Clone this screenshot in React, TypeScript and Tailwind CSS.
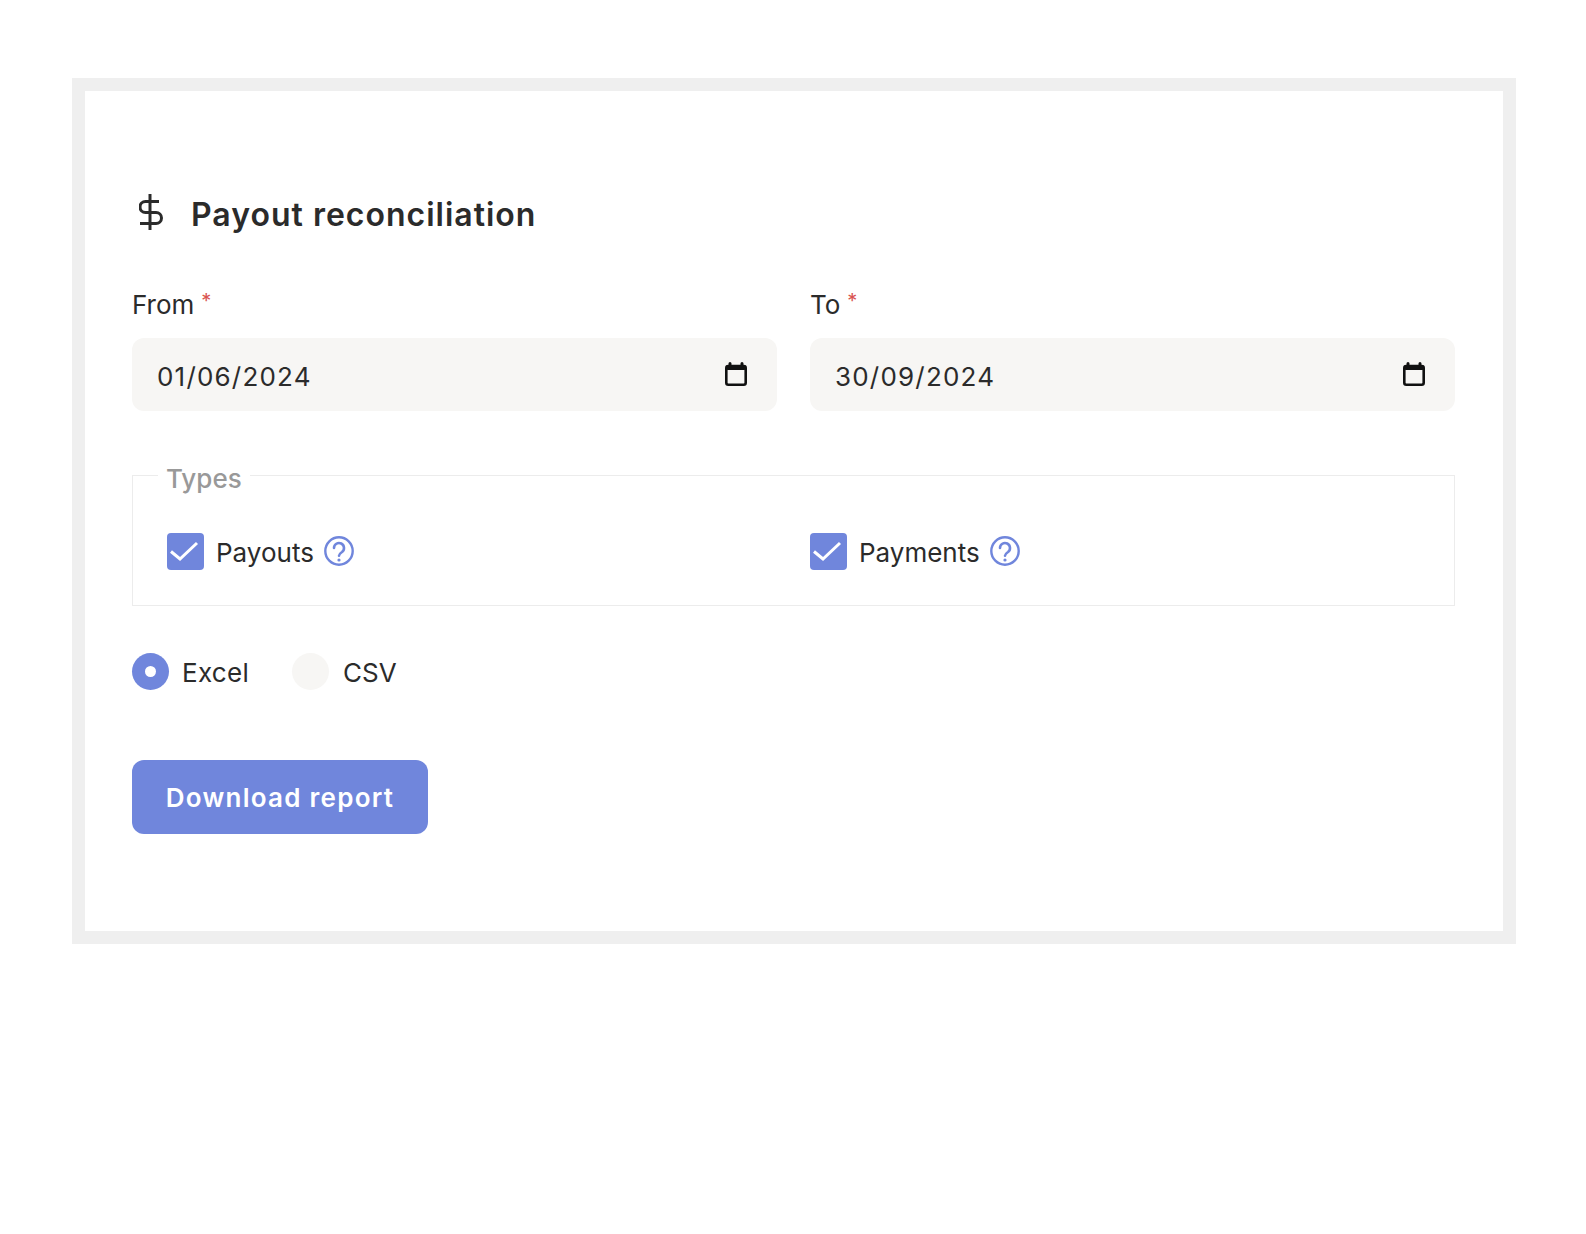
import React from "react";

const font = { fontFamily: '"Inter", "Liberation Sans", sans-serif' };

function Calendar() {
  return (
    <svg width="22" height="24" viewBox="0 0 22 24" className="mb-[2px] shrink-0">
      <path d="M5 1.5v3M17 1.5v3" stroke="#111" strokeWidth="3" strokeLinecap="round" />
      <rect x="1.3" y="4" width="19.4" height="18.7" rx="2" fill="none" stroke="#111" strokeWidth="2.6" />
      <rect x="1.3" y="3" width="19.4" height="5" rx="1.5" fill="#111" />
    </svg>
  );
}

function Help() {
  return (
    <svg width="30" height="30" viewBox="0 0 30 30" className="mb-[2px] shrink-0">
      <circle cx="15" cy="15" r="13.7" fill="none" stroke="#7086dc" strokeWidth="2.4" />
      <path d="M10 12a5 5 0 1 1 8 4c-1.8 1.2-3 2-3 3.8" fill="none" stroke="#7086dc" strokeWidth="2.6" strokeLinecap="round" />
      <circle cx="15" cy="24" r="1.6" fill="#7086dc" />
    </svg>
  );
}

function Check() {
  return (
    <div className="h-[37px] w-[37px] shrink-0 rounded-[4px] bg-[#7086dc]">
      <svg width="37" height="37" viewBox="0 0 37 37">
        <path d="M4 18.5L13 26L30 10" fill="none" stroke="#fff" strokeWidth="3" />
      </svg>
    </div>
  );
}

function DateField({ label, value }: { label: string; value: string }) {
  return (
    <div className="flex flex-col">
      <div className="flex h-[32px] items-center pb-[2px] text-[26px] text-[#2b2b2b]">
        <span>{label}</span>
        <span className="ml-[7px] mb-[6px] text-[20px] text-[#d9534f]">*</span>
      </div>
      <div className="mt-[17px] flex h-[73px] items-center justify-between rounded-[12px] bg-[#f7f6f4] pl-[25px] pr-[30px]">
        <span className="pt-[4px] text-[26px] tracking-[1.2px] text-[#2b2b2b]">{value}</span>
        <Calendar />
      </div>
    </div>
  );
}

function Option({ label }: { label: string }) {
  return (
    <div className="flex items-center">
      <Check />
      <span className="ml-[12px] pt-[2px] text-[26px] text-[#2b2b2b]">{label}</span>
      <span className="ml-[10px] flex"><Help /></span>
    </div>
  );
}

export default function App() {
  return (
    <div className="min-h-[1234px] bg-white pt-[78px]" style={font}>
      <div className="ml-[72px] mr-[70px] h-[866px] border-[13px] border-[#efefef] bg-white pl-[47px] pr-[48px] pt-[95px]">
        <div className="flex h-[56px] items-center">
          <svg width="24" height="36" viewBox="0 0 24 36" fill="none" stroke="#2b2b2b" strokeWidth="3" className="mb-[4px] ml-[7px] shrink-0">
            <path d="M11 0v36" />
            <path d="M20 7.5H6.5a5.5 5.5 0 0 0 0 11H17a5.5 5.5 0 0 1 0 11H1" />
          </svg>
          <h1 className="ml-[28px] pt-[1px] text-[32px] font-semibold tracking-[1px] text-[#2b2b2b]">Payout reconciliation</h1>
        </div>
        <div className="mt-[47px] grid grid-cols-2 gap-x-[33px]">
          <DateField label="From" value="01/06/2024" />
          <DateField label="To" value="30/09/2024" />
        </div>
        <fieldset className="mt-[49px] h-[146px] border border-[#ececec]">
          <legend className="ml-[25px] h-[30px] px-[8px] text-[26px] font-medium leading-[38px] text-[#999999]">Types</legend>
          <div className="grid grid-cols-[643px_1fr] pl-[34px] pt-[41px]">
            <Option label="Payouts" />
            <Option label="Payments" />
          </div>
        </fieldset>
        <div className="mt-[45px] flex items-center">
          <div className="flex h-[37px] w-[37px] items-center justify-center rounded-full bg-[#7086dc]">
            <div className="h-[11px] w-[11px] rounded-full bg-white" />
          </div>
          <span className="ml-[13px] pt-[2px] text-[26px] tracking-[0.3px] text-[#2b2b2b]">Excel</span>
          <div className="ml-[43px] h-[37px] w-[37px] rounded-full bg-[#f7f6f4]" />
          <span className="ml-[14px] pt-[2px] text-[26px] text-[#2b2b2b]">CSV</span>
        </div>
        <button className="mt-[68px] block h-[74px] w-[296px] rounded-[12px] bg-[#7086dc] text-[26px] font-semibold tracking-[1.25px] text-white">Download report</button>
      </div>
    </div>
  );
}
